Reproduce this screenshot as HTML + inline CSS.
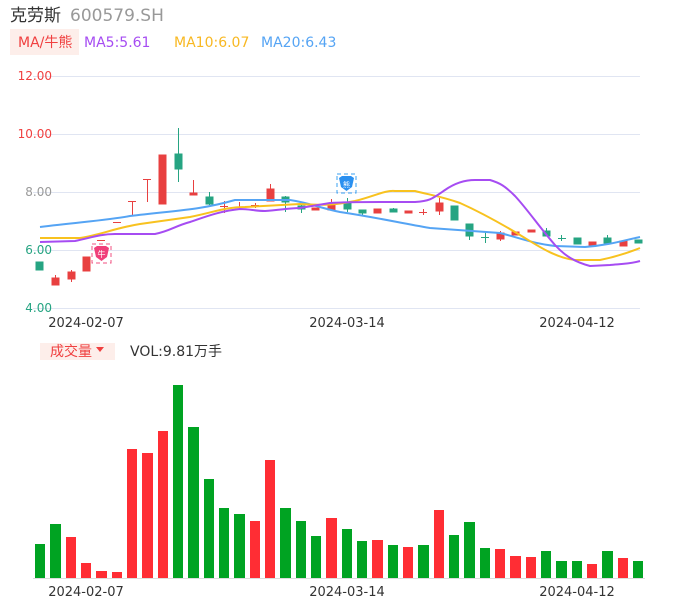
<!DOCTYPE html>
<html><head><meta charset="utf-8"><style>
body{margin:0;width:686px;height:606px;background:#fff;font-family:"DejaVu Sans","Noto Sans CJK SC",sans-serif;overflow:hidden}
</style></head><body>
<svg width="686" height="606" xmlns="http://www.w3.org/2000/svg" font-family="DejaVu Sans, Noto Sans CJK SC, sans-serif">
<text x="10" y="21" font-size="17" fill="#333" font-family="Noto Sans CJK SC, sans-serif">克劳斯</text>
<text x="70" y="21" font-size="17" fill="#999">600579.SH</text>
<rect x="10" y="29" width="69" height="26" fill="#fdeeea"/>
<text x="18" y="47" font-size="14" fill="#f04040" font-family="DejaVu Sans, Noto Sans CJK SC, sans-serif">MA/牛熊</text>
<text x="84" y="47" font-size="14" fill="#a64cf2">MA5:5.61</text>
<text x="174" y="47" font-size="14" fill="#f8b822">MA10:6.07</text>
<text x="261" y="47" font-size="14" fill="#55a4f4">MA20:6.43</text>
<g stroke="#e0e5f2" stroke-width="1">
<line x1="33" y1="76.5" x2="640" y2="76.5"/><line x1="33" y1="134.5" x2="640" y2="134.5"/><line x1="33" y1="192.5" x2="640" y2="192.5"/><line x1="33" y1="250.5" x2="640" y2="250.5"/><line x1="33" y1="308.5" x2="640" y2="308.5"/>
</g>
<g font-size="12" text-anchor="end">
<text x="52" y="80" fill="#f04040">12.00</text><text x="52" y="138" fill="#f04040">10.00</text><text x="52" y="196" fill="#999">8.00</text><text x="52" y="254" fill="#26a482">6.00</text><text x="52" y="312" fill="#26a482">4.00</text>
</g>
<g font-size="13" fill="#333" text-anchor="middle">
<text x="86" y="327">2024-02-07</text><text x="347" y="327">2024-03-14</text><text x="577" y="327">2024-04-12</text>
</g>
<g stroke-width="1">
<g fill="#26a482" stroke="#26a482">
<rect x="36" y="262" width="7" height="8"/>
<line x1="178.5" y1="128" x2="178.5" y2="182"/><rect x="175" y="154" width="7" height="15"/>
<line x1="209.5" y1="192" x2="209.5" y2="205"/><rect x="206" y="197" width="7" height="7"/>
<line x1="285.5" y1="196" x2="285.5" y2="212"/><rect x="282" y="197" width="7" height="5"/>
<line x1="301.5" y1="204" x2="301.5" y2="213"/><rect x="298" y="206" width="7" height="3"/>
<line x1="347.5" y1="198" x2="347.5" y2="212"/><rect x="344" y="202" width="7" height="7"/>
<line x1="362.5" y1="210" x2="362.5" y2="215"/><rect x="359" y="210" width="7" height="3"/>
<line x1="393.5" y1="208" x2="393.5" y2="212"/><rect x="390" y="209" width="7" height="3"/>
<rect x="451" y="206" width="7" height="14"/>
<line x1="469.5" y1="224" x2="469.5" y2="240"/><rect x="466" y="224" width="7" height="12"/>
<line x1="485.5" y1="231" x2="485.5" y2="243"/><line x1="481" y1="237.5" x2="489" y2="237.5"/>
<line x1="546.5" y1="228" x2="546.5" y2="236"/><rect x="543" y="231" width="7" height="5"/>
<line x1="561.5" y1="235" x2="561.5" y2="241"/><line x1="558" y1="238.5" x2="566" y2="238.5"/>
<rect x="574" y="238" width="7" height="6"/>
<line x1="607.5" y1="235" x2="607.5" y2="245"/><rect x="604" y="238" width="7" height="5"/>
<rect x="635" y="240" width="7" height="3"/>
</g>
<g fill="#e84040" stroke="#e84040">
<line x1="55.5" y1="275" x2="55.5" y2="285"/><rect x="52" y="278" width="7" height="7"/>
<line x1="71.5" y1="270" x2="71.5" y2="282"/><rect x="68" y="272" width="7" height="7"/>
<rect x="83" y="257" width="7" height="14"/>
<line x1="97" y1="240.5" x2="105" y2="240.5"/>
<line x1="113" y1="222.5" x2="121" y2="222.5"/>
<line x1="132.5" y1="201" x2="132.5" y2="215"/><line x1="128" y1="201.5" x2="136" y2="201.5"/>
<line x1="147.5" y1="179" x2="147.5" y2="202"/><line x1="143" y1="179.5" x2="151" y2="179.5"/>
<rect x="159" y="155" width="7" height="49"/>
<line x1="193.5" y1="180" x2="193.5" y2="195"/><rect x="190" y="193" width="7" height="2"/>
<line x1="224.5" y1="201" x2="224.5" y2="213"/><line x1="220" y1="206.5" x2="228" y2="206.5"/>
<line x1="239.5" y1="202" x2="239.5" y2="210"/><line x1="235" y1="207.5" x2="243" y2="207.5"/>
<line x1="255.5" y1="203" x2="255.5" y2="208"/><line x1="251" y1="205.5" x2="259" y2="205.5"/>
<line x1="270.5" y1="184" x2="270.5" y2="201"/><rect x="267" y="189" width="7" height="12"/>
<rect x="312" y="208" width="7" height="2"/>
<line x1="331.5" y1="199" x2="331.5" y2="211"/><rect x="328" y="203" width="7" height="7"/>
<rect x="374" y="209" width="7" height="4"/>
<rect x="405" y="211" width="7" height="2"/>
<line x1="423.5" y1="209" x2="423.5" y2="215"/><line x1="419" y1="212.5" x2="427" y2="212.5"/>
<line x1="439.5" y1="198" x2="439.5" y2="215"/><rect x="436" y="203" width="7" height="8"/>
<line x1="500.5" y1="231" x2="500.5" y2="241"/><rect x="497" y="233" width="7" height="6"/>
<rect x="512" y="232" width="7" height="3"/>
<rect x="528" y="230" width="7" height="2"/>
<rect x="589" y="242" width="7" height="3"/>
<rect x="620" y="241" width="7" height="5"/>
</g>
</g>
<g fill="none" stroke-width="2">
<path stroke="#55a4f4" d="M40,227 C80,222 110,220 130,216 C180,210 200,210 235,200 L290,200 C310,203 320,208 340,212 C380,218 400,223 430,228 L500,233 C520,238 535,244 555,246 L585,247 C610,245 625,240 640,237"/>
<path stroke="#f8c21f" d="M40,238 L80,238 C100,235 115,228 140,224 L190,217 C215,212 225,207 245,207 L300,204 C320,205 330,206 355,201 C375,196 385,190 395,191 L415,191 C430,195 440,196 460,203 C480,212 495,220 520,235 C535,244 555,258 575,260 L600,260 C615,257 630,252 640,248"/>
<path stroke="#a64cf2" d="M40,242 L75,241 C90,238 100,234 115,234 L155,234 C170,231 175,226 190,222 C205,217 220,211 240,209 C250,209 255,211 265,211 C280,210 290,208 300,208 L330,203 C345,202 360,202 380,202 L415,202 C430,201 432,199 445,190 C455,183 465,180 475,180 L490,180 C500,183 505,186 515,196 C528,210 540,228 555,245 C565,256 575,262 590,266 L610,265 C620,264 630,264 640,261"/>
</g>
<g>
<rect x="92" y="244" width="19" height="19" fill="none" stroke="#f05080" stroke-dasharray="4 3" stroke-width="1"/>
<path d="M94,248 L97,246 L106,246 L109,248 L107,257 L101.5,261 L96,257 Z" fill="#f0407a"/>
<text x="101.5" y="257" font-size="8" fill="#fff" text-anchor="middle" font-family="Noto Sans CJK SC, sans-serif">牛</text>
<rect x="337" y="174" width="19" height="19" fill="none" stroke="#3aa0f0" stroke-dasharray="4 3" stroke-width="1"/>
<path d="M339,178 L342,176 L351,176 L354,178 L352,187 L346.5,191 L341,187 Z" fill="#2a90f0"/>
<text x="346.5" y="187" font-size="7" fill="#fff" text-anchor="middle" font-family="Noto Sans CJK SC, sans-serif">熊</text>
</g>
<rect x="40" y="343" width="75" height="17" fill="#fdeeea"/>
<text x="50" y="356" font-size="14" fill="#f04040" font-family="Noto Sans CJK SC, sans-serif">成交量</text>
<path d="M96,347 L104,347 L100,352 Z" fill="#f04040"/>
<text x="130" y="356" font-size="14" fill="#333" font-family="DejaVu Sans, Noto Sans CJK SC, sans-serif">VOL:9.81万手</text>
<g fill="#00a322">
<rect x="35" y="544" width="10" height="34"/><rect x="50" y="524" width="11" height="54"/>
<rect x="173" y="385" width="10" height="193"/><rect x="188" y="427" width="11" height="151"/><rect x="204" y="479" width="10" height="99"/><rect x="219" y="508" width="10" height="70"/><rect x="234" y="514" width="11" height="64"/>
<rect x="280" y="508" width="11" height="70"/><rect x="296" y="521" width="10" height="57"/><rect x="311" y="536" width="10" height="42"/>
<rect x="342" y="529" width="10" height="49"/><rect x="357" y="541" width="10" height="37"/><rect x="388" y="545" width="10" height="33"/><rect x="418" y="545" width="11" height="33"/>
<rect x="449" y="535" width="10" height="43"/><rect x="464" y="522" width="11" height="56"/><rect x="480" y="548" width="10" height="30"/>
<rect x="541" y="551" width="10" height="27"/><rect x="556" y="561" width="11" height="17"/><rect x="572" y="561" width="10" height="17"/><rect x="602" y="551" width="11" height="27"/><rect x="633" y="561" width="10" height="17"/>
</g>
<g fill="#ff2d34">
<rect x="66" y="537" width="10" height="41"/><rect x="81" y="563" width="10" height="15"/><rect x="96" y="571" width="11" height="7"/><rect x="112" y="572" width="10" height="6"/>
<rect x="127" y="449" width="10" height="129"/><rect x="142" y="453" width="11" height="125"/><rect x="158" y="431" width="10" height="147"/>
<rect x="250" y="521" width="10" height="57"/><rect x="265" y="460" width="10" height="118"/><rect x="326" y="518" width="11" height="60"/>
<rect x="372" y="540" width="11" height="38"/><rect x="403" y="547" width="10" height="31"/><rect x="434" y="510" width="10" height="68"/>
<rect x="495" y="549" width="10" height="29"/><rect x="510" y="556" width="11" height="22"/><rect x="526" y="557" width="10" height="21"/><rect x="587" y="564" width="10" height="14"/><rect x="618" y="558" width="10" height="20"/>
</g>
<line x1="33" y1="578.5" x2="645" y2="578.5" stroke="#ddd" stroke-width="1"/>
<g font-size="13" fill="#333" text-anchor="middle">
<text x="86" y="596">2024-02-07</text><text x="347" y="596">2024-03-14</text><text x="577" y="596">2024-04-12</text>
</g>
</svg>
</body></html>
